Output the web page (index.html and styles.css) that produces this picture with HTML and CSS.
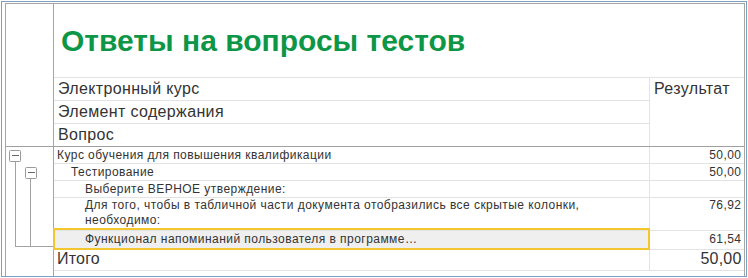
FILE: index.html
```html
<!DOCTYPE html>
<html lang="ru">
<head>
    <meta charset="UTF-8">
    <meta name="viewport" content="width=device-width, initial-scale=1.0">
    <title>Ответы на вопросы тестов</title>
    <link rel="stylesheet" href="styles.css">
</head>
<body>

    <div class="frame">
        <div class="report">
            <div class="report-head">
                <div class="tree-col"></div>
                <div class="head-main">
                    <h1 class="report-title">Ответы на вопросы тестов</h1>
                    <div class="head-fields">
                        <div class="field-list">
                            <div class="field">Электронный курс</div>
                            <div class="field">Элемент содержания</div>
                            <div class="field">Вопрос</div>
                        </div>
                        <div class="field-result">Результат</div>
                    </div>
                </div>
            </div>

            <div class="report-body">
                <div class="tree-col">
                    <!-- group expand/collapse markers -->
                    <svg class="tree" width="47" height="129" viewBox="0 0 47 129">
                        <g stroke="#a3a3a3" stroke-width="1" fill="none">
                            <line x1="9.5" y1="14.5" x2="9.5" y2="99.5"/>
                            <line x1="24.5" y1="31.5" x2="24.5" y2="99.5"/>
                            <line x1="9" y1="99.5" x2="47" y2="99.5"/>
                        </g>
                        <rect x="3.5" y="3.5" width="11" height="11" rx="1" fill="#fff" stroke="#9a9a9a"/>
                        <line x1="6" y1="8.5" x2="13" y2="8.5" stroke="#666"/>
                        <rect x="19.5" y="20.5" width="11" height="11" rx="1" fill="#fff" stroke="#9a9a9a"/>
                        <line x1="22" y1="25.5" x2="29" y2="25.5" stroke="#666"/>
                    </svg>
                </div>
                <div class="rows">
                    <div class="row">
                        <div class="name lvl-1">Курс обучения для повышения квалификации</div>
                        <div class="value">50,00</div>
                    </div>
                    <div class="row">
                        <div class="name lvl-2">Тестирование</div>
                        <div class="value">50,00</div>
                    </div>
                    <div class="row">
                        <div class="name lvl-3">Выберите ВЕРНОЕ утверждение:</div>
                        <div class="value"></div>
                    </div>
                    <div class="row tall">
                        <div class="name lvl-3">Для того, чтобы в табличной части документа отобразились все скрытые колонки, необходимо:</div>
                        <div class="value">76,92</div>
                    </div>
                    <div class="row current">
                        <div class="name lvl-3">Функционал напоминаний пользователя в программе…</div>
                        <div class="value">61,54</div>
                    </div>
                    <div class="row total">
                        <div class="name lvl-1">Итого</div>
                        <div class="value">50,00</div>
                    </div>
                </div>
            </div>
        </div>
    </div>

</body>
</html>
```

FILE: styles.css
```css
body {
    margin: 0;
    font-family: "Liberation Sans", Arial, sans-serif;
    color: #333;
    background-color: #fff;
}
.frame {
    margin: 1px;
    height: 276px;
    box-sizing: border-box;
    border: 1px solid #7e9ec0;
    padding: 1px 1px 0 3px;
    overflow: hidden;
}
.report {
    border: 1px solid #a5a5a5;
    border-bottom: none;
}
.tree-col {
    flex: none;
    width: 48px;
    box-sizing: border-box;
    border-right: 1px solid #a5a5a5;
}
.tree {
    display: block;
}

/* header */
.report-head {
    display: flex;
    border-bottom: 1px solid #a0a0a0;
}
.head-main {
    flex: 1;
}
.report-title {
    margin: 0;
    height: 74px;
    box-sizing: border-box;
    padding: 20px 0 0 7px;
    font-size: 30px;
    line-height: 34px;
    font-weight: bold;
    color: #0e9647;
    border-bottom: 1px solid #e3e3e3;
}
.head-fields {
    display: flex;
}
.field-list {
    width: 596px;
    box-sizing: border-box;
    border-right: 1px solid #e3e3e3;
}
.field,
.field-result {
    padding-left: 4px;
    font-size: 16px;
    line-height: 22px;
    letter-spacing: 0.35px;
}
.field {
    height: 23px;
    box-sizing: border-box;
    border-bottom: 1px solid #e3e3e3;
}
.field:last-child {
    height: 22px;
    border-bottom: none;
}
.field-result {
    flex: 1;
}

/* data rows */
.report-body {
    display: flex;
}
.rows {
    flex: 1;
}
.row {
    display: flex;
    border-bottom: 1px solid #e3e3e3;
    font-size: 12px;
    line-height: 16px;
    letter-spacing: 0.45px;
}
.name {
    width: 596px;
    box-sizing: border-box;
    border-right: 1px solid #e3e3e3;
}
.value {
    flex: 1;
    padding-right: 2.5px;
    text-align: right;
}
.lvl-1 { padding-left: 3px; }
.lvl-2 { padding-left: 17px; }
.lvl-3 { padding-left: 31px; }

.row.tall .name,
.row.tall .value {
    height: 32px;
    line-height: 15px;
}
.row.tall .name {
    padding-right: 60px;
}
.row.current .name,
.row.current .value {
    height: 18px;
}
.row.current .name {
    position: relative;
    background-color: #efefef;
}
.row.current .name::after {
    content: "";
    position: absolute;
    left: -1px;
    right: -1px;
    top: -3px;
    bottom: -1px;
    border: 2px solid #f2c62e;
}
.row.total .name,
.row.total .value {
    height: 20px;
    font-size: 16px;
    line-height: 18px;
    letter-spacing: 0.2px;
}
```
